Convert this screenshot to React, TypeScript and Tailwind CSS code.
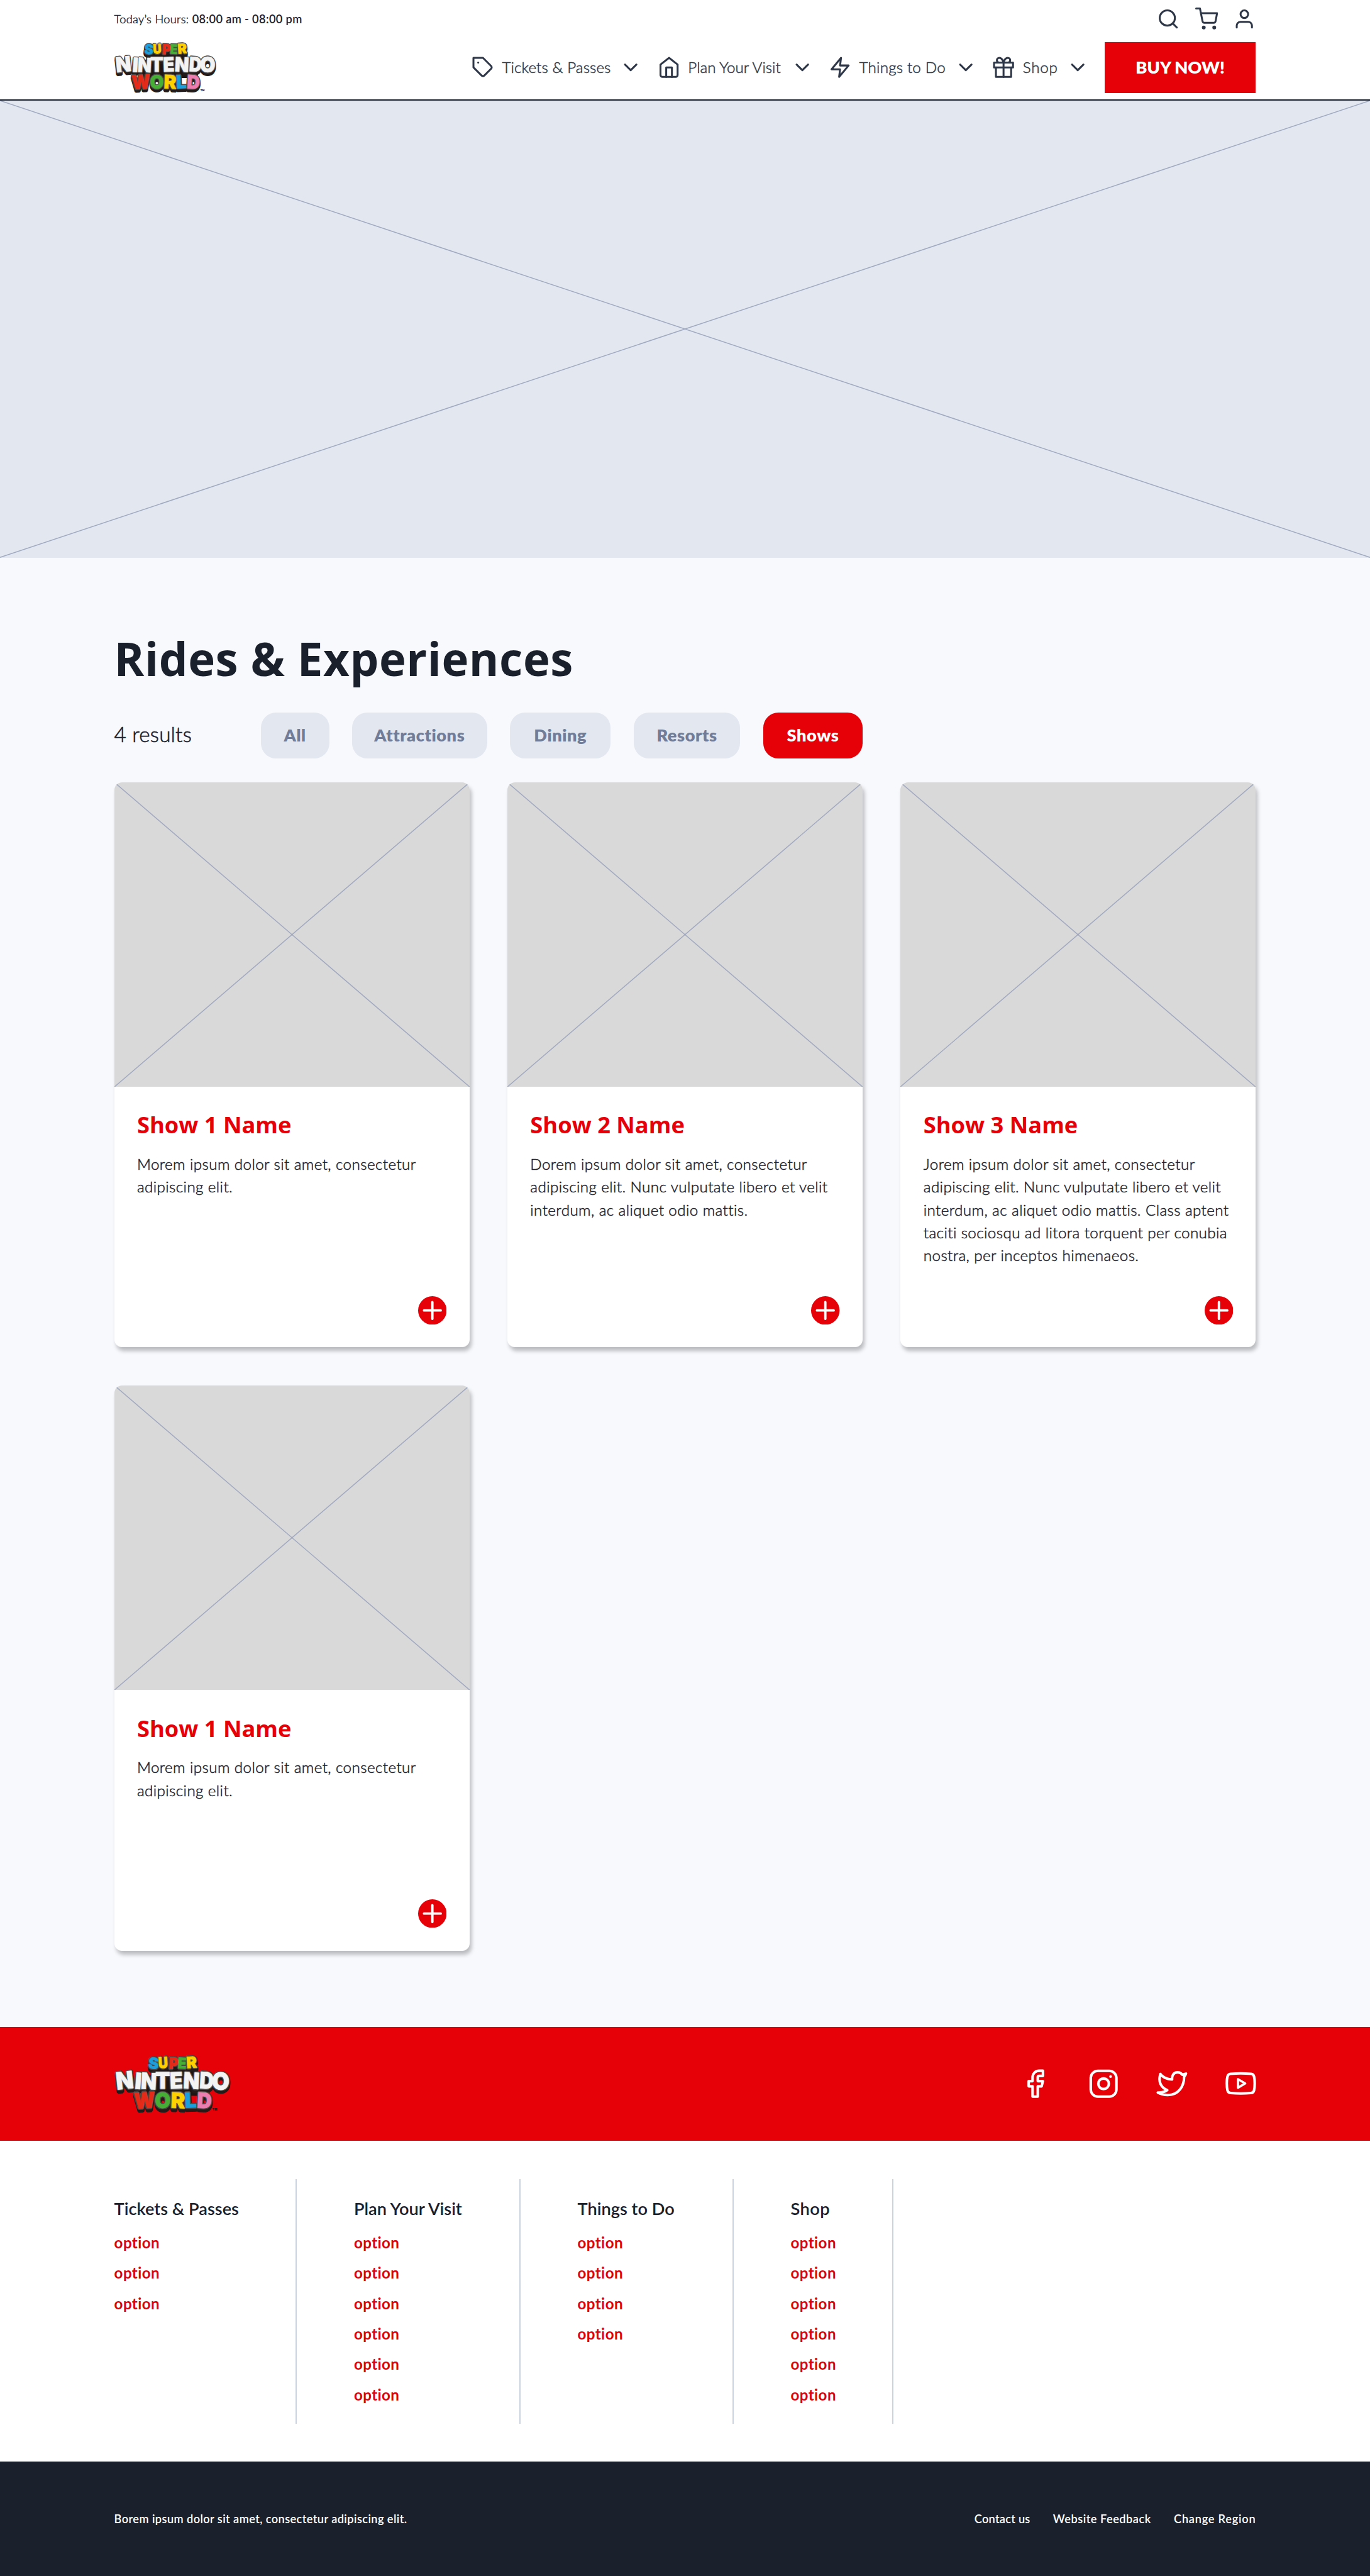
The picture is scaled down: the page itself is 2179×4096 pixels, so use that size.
import React from "react";
import {
  FiChevronDown,
  FiGift,
  FiHome,
  FiSearch,
  FiShoppingCart,
  FiTag,
  FiUser,
  FiZap,
} from "react-icons/fi";

type Glyph = { c: string; x: number; y: number; w: number; s: number; r: number; fill: string };

const BLUE = "#1a9fdc";
const YELLOW = "#fdd000";
const RED = "#e52a17";
const GREEN = "#47ae35";
const WHITE = "#f3f3f3";
const PINK = "#ec7db1";

const logoGlyphs: Glyph[] = [
  { c: "S", x: 71, y: 26, w: 21, s: 32, r: 4, fill: BLUE },
  { c: "U", x: 93, y: 26, w: 20, s: 32, r: -3, fill: YELLOW },
  { c: "P", x: 114, y: 27, w: 20, s: 33, r: 2, fill: RED },
  { c: "E", x: 133, y: 26, w: 18, s: 31, r: 2, fill: GREEN },
  { c: "R", x: 152, y: 26, w: 22, s: 33, r: -4, fill: YELLOW },
  { c: "N", x: 5, y: 71, w: 37, s: 50, r: -6, fill: WHITE },
  { c: "I", x: 42, y: 69, w: 14, s: 47, r: 4, fill: WHITE },
  { c: "N", x: 55, y: 69, w: 33, s: 47, r: 3, fill: WHITE },
  { c: "T", x: 86, y: 69, w: 31, s: 47, r: 0, fill: WHITE },
  { c: "E", x: 117, y: 69, w: 27, s: 47, r: -2, fill: WHITE },
  { c: "N", x: 144, y: 68, w: 34, s: 47, r: 3, fill: WHITE },
  { c: "D", x: 178, y: 68, w: 30, s: 48, r: 3, fill: WHITE },
  { c: "O", x: 205, y: 71, w: 37, s: 51, r: 0, fill: WHITE },
  { c: "W", x: 42, y: 111, w: 44, s: 46, r: -3, fill: RED },
  { c: "O", x: 85, y: 110, w: 33, s: 46, r: 0, fill: GREEN },
  { c: "R", x: 118, y: 109, w: 30, s: 45, r: 2, fill: YELLOW },
  { c: "L", x: 148, y: 109, w: 25, s: 44, r: -2, fill: BLUE },
  { c: "D", x: 173, y: 109, w: 31, s: 45, r: 3, fill: PINK },
];

function LogoLayer({ dy, stroke, width }: { dy: number; stroke?: string; width?: number }) {
  return (
    <g transform={`translate(0 ${dy})`}>
      {logoGlyphs.map((g, i) => (
        <text
          key={i}
          transform={`translate(${g.x} ${g.y}) rotate(${g.r})`}
          fontSize={g.s}
          textLength={g.w}
          lengthAdjust="spacingAndGlyphs"
          fill={stroke ?? g.fill}
          stroke={stroke ?? g.fill}
          strokeWidth={width ?? 1}
          strokeLinejoin="bevel"
        >
          {g.c}
        </text>
      ))}
    </g>
  );
}

function Logo({ className }: { className: string }) {
  return (
    <svg
      viewBox="0 0 244 119"
      className={`overflow-visible ${className}`}
      fontFamily="Inter, sans-serif"
      fontWeight={900}
    >
      <path d="M76 24H172V40H200V78L180 84H60L50 70V40H76Z" fill="#1d1513" />
      <LogoLayer dy={6} stroke="#231b19" width={6} />
      <LogoLayer dy={3} stroke="#231b19" width={6} />
      <LogoLayer dy={0} stroke="#4b4847" width={5.5} />
      <LogoLayer dy={0} />
      <text x="206" y="115" fontSize="6" fill="#231b19">
        TM
      </text>
    </svg>
  );
}

function Cross() {
  return (
    <svg className="block h-full w-full" preserveAspectRatio="none" viewBox="0 0 100 100">
      <path
        d="M0 0L100 100M100 0L0 100"
        stroke="#a0a9c0"
        strokeWidth="1.5"
        vectorEffect="non-scaling-stroke"
        fill="none"
      />
    </svg>
  );
}

const navItems = [
  { label: "Tickets & Passes", Icon: FiTag, box: "w-[174.8px] tracking-[0.004em]" },
  { label: "Plan Your Visit", Icon: FiHome, box: "w-[151.3px]" },
  { label: "Things to Do", Icon: FiZap, box: "w-[139.2px] tracking-[0.008em]" },
  { label: "Shop", Icon: FiGift, box: "w-[57.5px] tracking-[0.03em]" },
];

function Header() {
  return (
    <header className="flex h-[160.4px] flex-col border-b-2 border-[#1a202c] bg-white px-[181.6px]">
      <div className="flex h-[60.5px] items-center justify-between">
        <p className="text-[18.2px] font-light tracking-[0.018em] text-[#1a202c] [-webkit-text-stroke:0.45px]">
          Today’s Hours:{" "}
          <span className="font-semibold tracking-[0.02em] [-webkit-text-stroke:0px]">08:00 am - 08:00 pm</span>
        </p>
        <div className="flex gap-[24.2px] text-[36.3px] text-[#2d3748]">
          <FiSearch />
          <FiShoppingCart />
          <FiUser />
        </div>
      </div>
      <div className="mt-[6px] flex h-[81.7px] items-center justify-between">
        <Logo className="h-[79.4px] w-[162px] shrink-0" />
        <nav className="flex h-full items-center gap-[24.2px] text-[#2d3748]">
          {navItems.map(({ label, Icon, box }) => (
            <a key={label} className="flex items-center gap-[12.1px]">
              <Icon className="size-[36.3px] shrink-0" />
              <span
                className={`whitespace-nowrap pb-px text-[24.2px] font-light [-webkit-text-stroke:0.5px] ${box}`}
              >
                {label}
              </span>
              <FiChevronDown className="size-[36.3px] shrink-0" />
            </a>
          ))}
          <button className="h-full w-[240.6px] bg-[#e60008] text-[27.2px] font-extrabold text-white">
            BUY NOW!
          </button>
        </nav>
      </div>
    </header>
  );
}

const filters = [
  { label: "All", box: "w-[109px]" },
  { label: "Attractions", box: "w-[214.9px]" },
  { label: "Dining", box: "w-[160.4px]" },
  { label: "Resorts", box: "w-[169.5px]" },
  { label: "Shows", box: "w-[158.9px]", active: true },
];

const shows = [
  { title: "Show 1 Name", text: "Morem ipsum dolor sit amet, consectetur adipiscing elit." },
  {
    title: "Show 2 Name",
    text: "Dorem ipsum dolor sit amet, consectetur adipiscing elit. Nunc vulputate libero et velit interdum, ac aliquet odio mattis.",
  },
  {
    title: "Show 3 Name",
    text: "Jorem ipsum dolor sit amet, consectetur adipiscing elit. Nunc vulputate libero et velit interdum, ac aliquet odio mattis. Class aptent taciti sociosqu ad litora torquent per conubia nostra, per inceptos himenaeos.",
  },
  { title: "Show 1 Name", text: "Morem ipsum dolor sit amet, consectetur adipiscing elit." },
];

function Card({ title, text }: { title: string; text: string }) {
  return (
    <article className="flex h-[898.8px] flex-col overflow-hidden rounded-[12.1px] bg-white shadow-[3px_6px_6px_rgba(0,0,0,0.25)]">
      <div className="h-[484.2px] shrink-0 bg-[#d9d9d9]">
        <Cross />
      </div>
      <div className="flex flex-1 flex-col px-[36.3px] pt-[38.6px] pb-[36.3px]">
        <h2 className="font-['Open_Sans',sans-serif] text-[36.3px] leading-[45.4px] font-bold text-[#e60008]">
          {title}
        </h2>
        <p className="mt-[21.3px] text-[24.2px] leading-[36.3px] font-light tracking-[0.017em] text-[#1a202c] [-webkit-text-stroke:0.5px]">
          {text}
        </p>
        <svg viewBox="0 0 60 60" className="mt-auto size-[45.4px] self-end">
          <circle cx="30" cy="30" r="30" fill="#e60008" />
          <path d="M30 12.4V47.6M12.4 30H47.6" stroke="#fff" strokeWidth="5" strokeLinecap="round" />
        </svg>
      </div>
    </article>
  );
}

function Results() {
  return (
    <main className="px-[181.6px] pt-[112.1px] pb-[121.1px]">
      <h1 className="font-['Open_Sans',sans-serif] text-[72.6px] leading-[96.8px] font-bold tracking-[0.007em] text-[#1a202c]">
        Rides &amp; Experiences
      </h1>
      <div className="mt-[37.7px] flex h-[72.6px] items-center">
        <p className="w-[233px] pb-[4px] text-[33.3px] font-light tracking-[0.005em] text-[#1a202c] [-webkit-text-stroke:0.6px]">
          4 results
        </p>
        <div className="flex h-full gap-[36.3px]">
          {filters.map(({ label, box, active }) => (
            <button
              key={label}
              className={`h-full rounded-[24.2px] pb-px text-[27.2px] font-extrabold tracking-[0.02em] ${box} ${
                active ? "bg-[#e60008] text-white" : "bg-[#e2e7f0] text-[#717d98]"
              }`}
            >
              {label}
            </button>
          ))}
        </div>
      </div>
      <div className="mt-[37.8px] grid grid-cols-3 gap-[60.5px]">
        {shows.map((show, i) => (
          <Card key={i} {...show} />
        ))}
      </div>
    </main>
  );
}

function SocialBar() {
  const icon = "size-[54.5px]";
  return (
    <section className="flex h-[181.6px] items-center justify-between bg-[#e60008] pr-[178.6px] pl-[181.6px]">
      <Logo className="h-[90px] w-[184.6px]" />
      <div className="flex gap-[54.5px] text-white">
        <svg viewBox="0 0 24 24" className={icon} fill="none" stroke="currentColor" strokeWidth="1.95" strokeLinejoin="round">
          <path
            transform="translate(2.1 1.1) scale(.908)"
            d="M17 2h-3a5 5 0 0 0-5 5v3H6v4h3v8h4v-8h3l1-4h-4V7a1 1 0 0 1 1-1h3z"
          />
        </svg>
        <svg viewBox="0 0 24 24" className={icon} fill="none" stroke="currentColor" strokeWidth="1.8">
          <rect x="3" y="3" width="18" height="18" rx="5" />
          <circle cx="12" cy="12" r="3.7" />
          <circle cx="16.9" cy="7" r="0.95" fill="currentColor" stroke="none" />
        </svg>
        <svg viewBox="0 0 24 24" className={icon} fill="none" stroke="currentColor" strokeWidth="1.8" strokeLinejoin="round">
          <path d="M3.8 5.2C5 7 8 8.9 12 9C11.8 6 13.2 4 15.8 4C17.2 4 18.4 4.6 19.1 5.7L21.7 4.9C21.5 5.6 21 6.4 20.4 7C20.5 13.4 16.8 19.9 9 19.9C6.4 19.9 3.8 19.3 2 18.2C4.8 18.3 7 17.7 8.6 16.5C4.5 14.8 2 11 3.8 5.2Z" />
        </svg>
        <svg viewBox="0 0 24 24" className={icon} fill="none" stroke="currentColor" strokeWidth="1.8" strokeLinejoin="round">
          <path d="M2.3 11.8C2.3 9.5 2.5 8 2.8 6.9C3.1 5.7 3.8 5.2 5 5.1C9 4.7 15.2 4.7 19.2 5.1C20.4 5.2 21.1 5.8 21.4 6.9C22 9.5 22 14.1 21.4 16.7C21.1 17.9 20.4 18.4 19.2 18.5C15.2 18.9 9 18.9 5 18.5C3.8 18.4 3.1 17.9 2.8 16.7C2.5 15.5 2.3 14 2.3 11.8Z" />
          <path d="M10.1 8.8L15.2 11.8L10.1 14.8Z" strokeWidth="1.6" />
        </svg>
      </div>
    </section>
  );
}

const columns = [
  { title: "Tickets & Passes", count: 3, box: "w-[290.5px]" },
  { title: "Plan Your Visit", count: 6, box: "w-[264.8px]" },
  { title: "Things to Do", count: 4, box: "w-[248.2px]" },
  { title: "Shop", count: 6, box: "w-[163.4px] tracking-[0.03em]" },
];

function Links() {
  return (
    <section className="flex gap-[90.8px] bg-white px-[181.6px] py-[60.5px]">
      {columns.map(({ title, count, box }) => (
        <div key={title} className={`h-[388.9px] border-r-2 border-[#cbd2e0] pt-[31.2px] ${box}`}>
          <h3 className="text-[27.2px] leading-[32px] font-semibold text-[#1a202c]">{title}</h3>
          <ul className="mt-[13.6px] text-[24.2px] leading-[48.4px] font-bold tracking-[0.016em] text-[#dc040c]">
            {Array.from({ length: count }, (_, i) => (
              <li key={i}>option</li>
            ))}
          </ul>
        </div>
      ))}
    </section>
  );
}

function Footer() {
  return (
    <footer className="flex h-[181.6px] items-center justify-between bg-[#1a202c] px-[181.6px] pt-px text-[18.2px] font-semibold text-white">
      <p className="tracking-[0.023em]">Borem ipsum dolor sit amet, consectetur adipiscing elit.</p>
      <div className="flex gap-[36.3px]">
        <a className="tracking-[0.014em]">Contact us</a>
        <a className="tracking-[0.028em]">Website Feedback</a>
        <a className="tracking-[0.042em]">Change Region</a>
      </div>
    </footer>
  );
}

export default function App() {
  return (
    <div className="h-[4096px] w-[2179px] overflow-hidden bg-[#f8f9fd] font-['Lato',sans-serif] [font-variant-ligatures:none]">
      <Header />
      <div className="h-[726.3px] bg-[#e2e7f0]">
        <Cross />
      </div>
      <Results />
      <SocialBar />
      <Links />
      <Footer />
    </div>
  );
}
